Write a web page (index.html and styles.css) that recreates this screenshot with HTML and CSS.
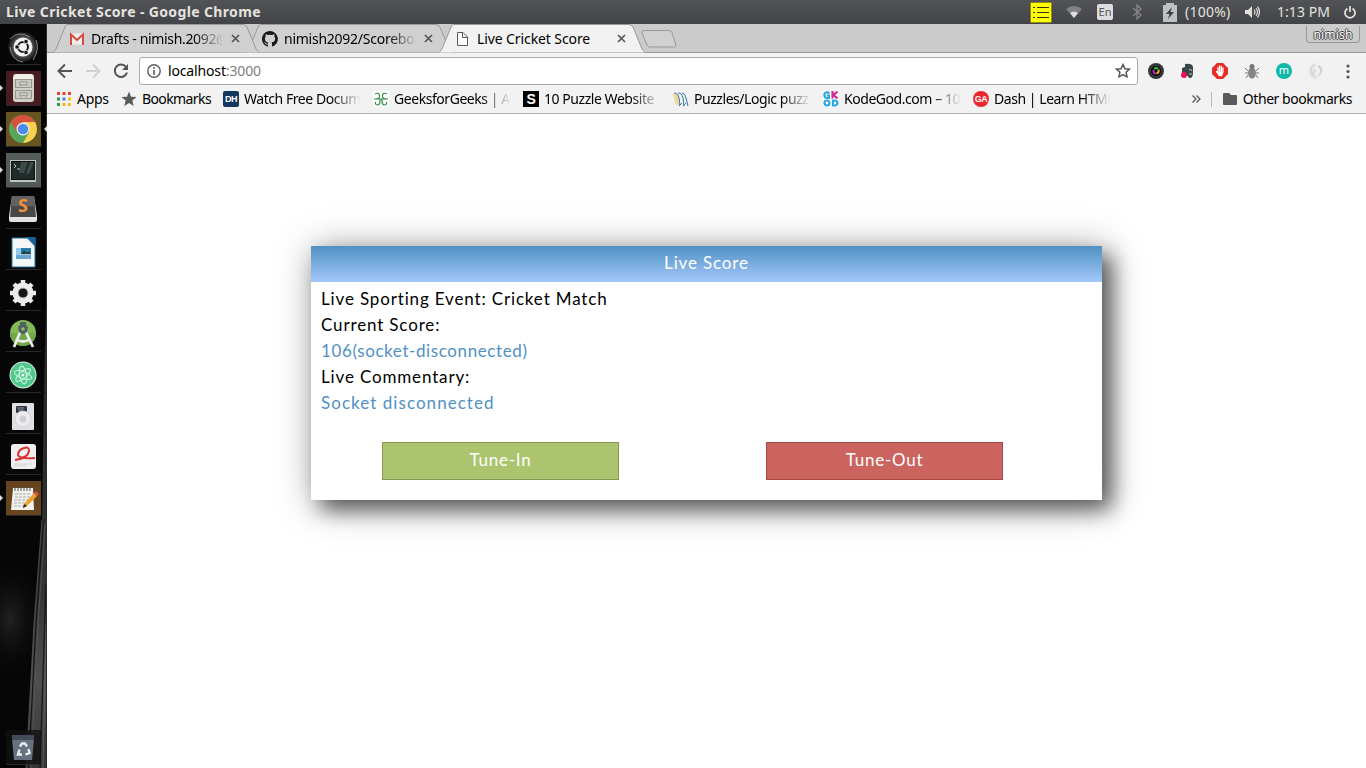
FILE: index.html
```html
<!DOCTYPE html>
<html lang="en">
<head>
<meta charset="utf-8">
<title>Live Cricket Score</title>
<link rel="stylesheet" href="styles.css">
</head>
<body>
<header class="panel">
  <span class="panel-title">Live Cricket Score - Google Chrome</span>
  <div class="indicators">
    <svg class="i-note" width="22" height="21" viewBox="0 0 22 21"><rect x=".5" y=".5" width="21" height="20" rx="1" fill="#ff0" stroke="#8b8c12"/><path d="M3 5.500h2M3 10.500h2M3 15.500h2M7 5.500h12M7 10.500h12M7 15.500h12" stroke="#353500" stroke-width="1"/></svg>
    <svg class="i-wifi" width="16" height="12" viewBox="0 0 16 12"><path d="M0 3Q8-3 16 3L8 12z" fill="#818285"/><path d="M4 7Q8 4 12 7L8 12z" fill="#dedfdc"/></svg>
    <span class="i-lang">En</span>
    <svg class="i-bt" width="11" height="16" viewBox="0 0 11 16"><path d="M1 4l8 7-4 4V1l4 4-8 7" fill="none" stroke="#88898b" stroke-width="1.3"/></svg>
    <svg class="i-batt" width="14" height="19" viewBox="0 0 14 19"><path d="M3 2V0h8v2h3v17H0V2z" fill="#bfc0c0"/><path d="M9 4L3 11h3.500L5 16l6-7H7.500z" fill="#3d3e41"/></svg>
    <span class="i-pct">(100%)</span>
    <svg class="i-vol" width="15" height="12" viewBox="0 0 15 12"><path d="M0 4h3l4-4v12L3 8H0z" fill="#e1e0da"/><path d="M9 3.500q2 2.500 0 5M11 2q3 4 0 8M12.500.5q4 5.500 0 11" fill="none" stroke="#dedfdc" stroke-width="1.200"/></svg>
    <span class="i-time">1:13 PM</span>
    <svg class="i-power" width="12" height="13" viewBox="0 0 12 13"><path d="M3.500 2.500a5 5 0 1 0 5 0M6 0v6" fill="none" stroke="#e4e3df" stroke-width="1.700"/></svg>
  </div>
</header>
<div class="desktop">
  <nav class="launcher">
    <svg class="grain" width="47" height="744" viewBox="0 0 47 744"><defs><linearGradient id="wood" x1="0" y1="0" x2="0" y2="1"><stop offset="0" stop-color="#222"/><stop offset=".65" stop-color="#333"/><stop offset=".82" stop-color="#505050"/><stop offset="1" stop-color="#353535"/></linearGradient><radialGradient id="haze"><stop offset="0" stop-color="#222"/><stop offset="1" stop-color="#080808" stop-opacity="0"/></radialGradient></defs><path d="M0 0h47v744H0z" fill="#060606"/><ellipse cx="10" cy="595" rx="35" ry="60" fill="url(#haze)"/><path d="M47 240L44 360 42 496 34 600 26 744H47z" fill="url(#wood)"/><path d="M42 496L34 600 26 744M45 500L38 600 31 744" stroke="#585858" fill="none" stroke-width=".8"/><path d="M43.500 496L36 600 28.500 744M46 560L40 744" stroke="#161616" fill="none" stroke-width="1.200"/><path d="M46 600L43 744" stroke="#666" stroke-width=".7"/><path d="M46.500 0v744" stroke="#2b2b2b"/></svg>
    <div class="tile"><svg viewBox="0 0 35 35"><defs><radialGradient id="dash"><stop offset=".4" stop-color="#777"/><stop offset="1" stop-color="#111"/></radialGradient></defs><circle cx="17" cy="17" r="15" fill="url(#dash)"/><path d="M4 9q8-9 20-2M30 10q4 9-3 20M4 17q2 14 13 15" stroke="#888" fill="none"/><circle cx="17" cy="17" r="9.500" fill="#f3f3f3"/><circle cx="17" cy="17" r="5" fill="none" stroke="#161616" stroke-width="2"/><g fill="#161616" stroke="#f3f3f3" stroke-width=".8"><circle cx="11" cy="17" r="2.200"/><circle cx="20" cy="11.500" r="2.200"/><circle cx="20" cy="22.500" r="2.200"/></g></svg></div>
    <div class="tile red run"><svg viewBox="0 0 35 35"><rect x="7" y="3" width="21" height="28" rx="3" fill="#d0d0c8"/><path d="M7 8l2-5h17l2 5z" fill="#efefeb"/><g fill="#c9c9c1" stroke="#969690"><rect x="9.500" y="8.500" width="16" height="8"/><rect x="9.500" y="19.500" width="16" height="8"/></g><g fill="#e8e8e3" stroke="#888"><path d="M14 11h7v3h-1l-2-1-3 1h-1zM14 22h7v3h-1l-2-1-3 1h-1z"/></g></svg></div>
    <div class="tile gold run active"><svg viewBox="0 0 35 35"><circle cx="17" cy="17" r="14" fill="#57a65b"/><path d="M17 17L4.900 10A14 14 0 0 1 29.100 10z" fill="#d94f3d"/><path d="M17 10h12A14 14 0 0 1 17 31l6.100-10.500z" fill="#fbd04f"/><path d="M4.900 10l6 10.500L17 10z" fill="#d94f3d"/><circle cx="17" cy="17" r="6.500" fill="#f4f4f4"/><circle cx="17" cy="17" r="5.300" fill="#4b8bed"/></svg></div>
    <div class="tile gray run"><svg viewBox="0 0 35 35"><rect x="4" y="7" width="26" height="22" fill="#bec2c0"/><rect x="5.500" y="8.500" width="23" height="18" fill="#202b29" stroke="#111"/><path d="M15 9l-2 11h5L22 9zM24 9l-4 12h3L28 9z" fill="#3c4b48"/><path d="M8 11l2 2-2 2M11 16h3" stroke="#bbb" fill="none"/></svg></div>
    <div class="tile"><svg viewBox="0 0 35 35"><path d="M6 2h22l3 20v4q0 2-2 2H5q-2 0-2-2v-4z" fill="#e2e2e2"/><path d="M6 2h22l2 21H4z" fill="#484848"/><path d="M6 2h22l1 10H5z" fill="#626262"/></svg><span class="sublime">S</span></div>
    <div class="tile"><svg viewBox="0 0 35 35"><path d="M6 3h23v29H6z" fill="#f5f6f7" stroke="#2272a4"/><path d="M20 2h9.500v10z" fill="#17649b"/><path d="M10 13h15v11H10z" fill="#93c8e7"/><path d="M15 13h10v6H15z" fill="#287eab"/><path d="M15 19l3-4 3 3 2-2 2 3z" fill="#293f37"/><path d="M10 20h15v4H10z" fill="#6aa5cd"/></svg></div>
    <div class="tile"><svg viewBox="0 0 35 35"><circle cx="17" cy="17" r="10.500" fill="#ececec"/><path d="M17 4v26M4 17h26M8 8l18 18M26 8L8 26" stroke="#ececec" stroke-width="4.500"/><circle cx="17" cy="17" r="5" fill="#141414" stroke="#bbb"/></svg></div>
    <div class="tile"><svg viewBox="0 0 35 35"><circle cx="17" cy="16" r="13" fill="#82b953"/><path d="M4 16h26a13 13 0 0 1-26 0z" fill="#70a748"/><path d="M15 13L8 30M19 13l8 17M10 22q7 5 14 0" fill="none" stroke="#eceeeb" stroke-width="2.700"/><path d="M14 5h6v3l2 2-1 5-3 2h-2l-3-2-1-5 2-2z" fill="#4c6263"/><circle cx="17" cy="12" r="1.700" fill="#97be6f"/></svg></div>
    <div class="tile"><svg viewBox="0 0 35 35"><circle cx="17" cy="17" r="13.500" fill="#d7efe1"/><circle cx="17" cy="17" r="12.500" fill="#52c88d"/><g fill="none" stroke="#c7f4dc" stroke-width="1.100"><ellipse cx="17" cy="17" rx="9" ry="3.500" transform="rotate(20 17 17)"/><ellipse cx="17" cy="17" rx="9" ry="3.500" transform="rotate(80 17 17)"/><ellipse cx="17" cy="17" rx="9" ry="3.500" transform="rotate(140 17 17)"/></g><circle cx="17" cy="17" r="1.500" fill="#fff"/></svg></div>
    <div class="tile"><svg viewBox="0 0 35 35"><rect x="6" y="4" width="22" height="27" rx="1" fill="#dfe0e5"/><rect x="10" y="7" width="11" height="7" rx="1" fill="#303541"/><path d="M11 9h7M12 11h5" stroke="#8890a0"/><circle cx="17" cy="20" r="8" fill="#ececf0" stroke="#d2d3d8"/><circle cx="17" cy="20" r="3.500" fill="#cfd0d6"/></svg></div>
    <div class="tile"><svg viewBox="0 0 35 35"><rect x="5" y="4" width="25" height="25" rx="3" fill="#efefef"/><path d="M9 20q13-2 14-9 0-5-5-3-6 2-6 7 1 4 17 3" fill="none" stroke="#da3136" stroke-width="2"/><path d="M8 24h18M8 26h12" stroke="#d4d4d4"/></svg></div>
    <div class="tile brown run"><svg viewBox="0 0 35 35"><path d="M7 7h20l1 22H5z" fill="#f1f1ee"/><path d="M9 6v4M12 6v4M15 6v4M18 6v4M21 6v4M24 6v4" stroke="#555"/><path d="M9 13h15M9 16h15M8 19h14M8 22h11M8 25h10" stroke="#aaa" stroke-dasharray="3 1"/><path d="M18 23l10-11 3 3-10 10-4 2z" fill="#ef9f2b"/><path d="M28 12l2-2 3 3-2 2z" fill="#d95050"/><path d="M17 27l1-4 3 2z" fill="#2a2520"/></svg></div>
    <div class="tile trash"><svg viewBox="0 0 35 35"><path d="M6 5h22v4l-2 21H8L6 9z" fill="#66707f"/><path d="M6 5h22v5H6z" fill="#434b58"/><g fill="none" stroke="#e8edf2" stroke-width="2.400"><path d="M14 16.500l2-3h3l2 3M22.500 19l1 4-4 1.500M16 24.500h-4l1.500-5"/></g></svg></div>
  </nav>
  <section class="browser">
    <div class="tabs">
      <div class="tab t1"><svg class="shape" width="206" height="29"><path d="M0 28.500L3 25 12 3Q13 .5 15 .5H190Q192 .5 194 3L203 25 206 28.500"/></svg>
        <svg class="fav" viewBox="0 0 16 16"><path d="M1 2.500h14v11H1z" fill="#eee"/><path d="M2 14V3.500l6 5.500 6-5.500V14" fill="none" stroke="#d94a3d" stroke-width="2"/></svg><span class="tab-label fade l1">Drafts - nimish.2092@</span><svg class="x" width="9" height="9"><path d="M1 1l7 7M8 1L1 8"/></svg></div>
      <div class="tab t2"><svg class="shape" width="206" height="29"><path d="M0 28.500L3 25 12 3Q13 .5 15 .5H190Q192 .5 194 3L203 25 206 28.500"/></svg>
        <svg class="fav" viewBox="0 0 16 16"><path d="M8 0C3.580 0 0 3.580 0 8c0 3.540 2.290 6.530 5.470 7.590.4.070.55-.17.55-.38V13.700c-2.200.5-2.700-.9-2.700-.9-.4-.9-.9-1.200-.9-1.200-.7-.5.100-.5.100-.5.800.1 1.200.8 1.200.8.700 1.200 1.900.9 2.300.7.100-.5.300-.9.500-1.100-1.800-.2-3.600-.9-3.600-4 0-.9.300-1.600.8-2.100-.1-.2-.4-1 .1-2.100 0 0 .7-.2 2.200.8a7.500 7.500 0 0 1 4 0c1.500-1 2.200-.8 2.200-.8.500 1.100.2 1.900.1 2.100.5.600.8 1.300.8 2.100 0 3.100-1.900 3.700-3.700 3.900.3.300.6.800.6 1.500v2.200c0 .2.100.5.600.4A8 8 0 0 0 8 0" fill="#181818"/></svg><span class="tab-label fade l2">nimish2092/Scoreboa</span><svg class="x" width="9" height="9"><path d="M1 1l7 7M8 1L1 8"/></svg></div>
      <div class="tab t3"><svg class="shape" width="206" height="29"><path d="M0 28.500L3 25 12 3Q13 .5 15 .5H190Q192 .5 194 3L203 25 206 28.500"/></svg>
        <svg class="fav" viewBox="0 0 16 16"><path d="M2.500 1.500H8L12.500 6v8.500h-10zM7.500 1.500v5h5" fill="#fff" stroke="#5a5a5a"/></svg><span class="tab-label l3">Live Cricket Score</span><svg class="x" width="9" height="9"><path d="M1 1l7 7M8 1L1 8"/></svg></div>
      <svg class="newtab" width="36" height="18"><path d="M3 .5h25q2 0 3 2l4 13q0 1.500-1.500 1.500H9q-2 0-3-2L1 3q-.5-2.500 2-2.500" fill="#d0d0d0" stroke="#999"/></svg>
      <span class="user">nimish</span>
    </div>
    <div class="toolbar">
      <div class="nav">
        <svg width="16" height="16"><path d="M15 8H2M8 1.500L1.500 8 8 14.500" fill="none" stroke="#555" stroke-width="2"/></svg>
        <svg width="16" height="16"><path d="M1 8h13M8 1.500L14.500 8 8 14.500" fill="none" stroke="#d1d1d1" stroke-width="2"/></svg>
        <svg width="16" height="16"><path d="M13 4A6.200 6.200 0 1 0 14 9.500" fill="none" stroke="#555" stroke-width="2"/><path d="M15 1v6H9z" fill="#555"/></svg>
      </div>
      <div class="address"><svg width="14" height="14"><circle cx="7" cy="7" r="6.200" fill="none" stroke="#5b5b5b" stroke-width="1.400"/><path d="M7 3v1.700M7 6v5" stroke="#5b5b5b" stroke-width="1.600"/></svg><span class="url">localhost<span class="port">:3000</span></span><svg class="star" width="16" height="16"><path d="M8 1.500l1.900 4.200 4.600.5-3.400 3.100.9 4.500L8 11.500l-4 2.300.9-4.500L1.500 6.200l4.600-.5z" fill="none" stroke="#555" stroke-width="1.500"/></svg></div>
      <div class="extensions">
        <svg viewBox="0 0 16 16"><circle cx="8" cy="8" r="8" fill="#35383b"/><circle cx="8" cy="8" r="5" fill="#080808"/><path d="M6 6q3-2 4 0" stroke="#26ca38" fill="none" stroke-width="2"/><path d="M5.500 7q0 4 2.500 3.500" stroke="#bd27d0" fill="none" stroke-width="2"/><path d="M10.500 6.500q1 3-2 4" stroke="#f0b01d" fill="none" stroke-width="2"/></svg>
        <svg viewBox="0 0 16 16"><path d="M5 1q7-1 8 3v5q0 6-3 6-2 0-2-2-5 0-6-4V5l3-1z" fill="#36474b"/><path d="M9 7q2-2 3 1M9 11h3" fill="none" stroke="#c7d0d0"/><circle cx="4" cy="12" r="3" fill="#f20c55"/></svg>
        <svg viewBox="0 0 16 16"><path d="M5 0h6l5 5v6l-5 5H5l-5-5V5z" fill="#e52d25"/><path d="M6 9V4.500M7.700 9V3M9.400 9V3.500M11 9V5M4.500 8.500l3 4h2L11 9" fill="#fff" stroke="#fff" stroke-width="1.300" stroke-linecap="round"/></svg>
        <svg viewBox="0 0 16 16"><ellipse cx="8" cy="10" rx="4" ry="5.500" fill="#858585"/><circle cx="8" cy="3.500" r="2.500" fill="#777"/><path d="M4 8L1 5M12 8l3-3M4 10H1M12 10h3M4 12l-2 3M12 12l2 3" stroke="#777"/></svg>
        <span class="m">m</span>
        <svg viewBox="0 0 16 16"><path d="M8 1.500A6.500 6.500 0 0 0 6 13.500q-2-4 2-7" fill="none" stroke="#dcdcdc" stroke-width="3"/><path d="M10 2q8 3 2 10-2 2-5 2 5-2 5-6 0-3-2-3z" fill="#d0d0d0"/></svg>
        <svg viewBox="0 0 16 16"><g fill="#555"><circle cx="8" cy="3" r="1.600"/><circle cx="8" cy="8.500" r="1.600"/><circle cx="8" cy="14" r="1.600"/></g></svg>
      </div>
    </div>
    <div class="bookmarks">
      <div class="bm b-apps"><svg viewBox="0 0 16 16"><path d="M1 1h3v3H1zM6.500 1h3v3h-3zM12 1h3v3h-3z" fill="#ed3e36"/><path d="M1 6.500h3v3H1zM1 12h3v3H1z" fill="#28984c"/><path d="M6.500 6.500h3v3h-3z" fill="#3486ef"/><path d="M12 6.500h3v3h-3zM6.500 12h3v3h-3zM12 12h3v3h-3z" fill="#fbb90a"/></svg><span>Apps</span></div>
      <div class="bm b-star"><svg viewBox="0 0 16 16"><path d="M8 .5l2 5.300 5.600.2-4.300 3.600 1.400 5.500L8 12l-4.700 3.100 1.400-5.500L.4 6 6 5.800z" fill="#5a5a5a"/></svg><span>Bookmarks</span></div>
      <div class="bm wide"><span class="fi dh">DH</span><span class="fade">Watch Free Docum</span></div>
      <div class="bm wide"><svg viewBox="0 0 16 16"><path d="M0 0h16v16H0z" fill="#fff"/><path d="M2 3q4-2 4.500 1.500Q7 8 2 8M14 3Q10 1 9.500 4.500 9 8 14 8M1 8h14M7 8q.5 6-2.500 6Q2 14 2.500 11M9 8q-.5 6 2.500 6 2.500 0 2-3" fill="none" stroke="#2f8d46" stroke-width="1.200"/></svg><span class="fade">GeeksforGeeks | A</span></div>
      <div class="bm wide"><span class="fi s">S</span><span class="fade">10 Puzzle Website</span></div>
      <div class="bm wide"><svg viewBox="0 0 16 16"><path d="M0 3q3-2 6 2l1 9q-4 1-5-2z" fill="#ead9a0"/><path d="M1 2q4 0 5 5l1 7M5 2q4 0 5 5l1 8M9 2q3 0 4 5l2 8M6 15l3-3M10 15l3-3" fill="none" stroke="#3973a9"/></svg><span class="fade">Puzzles/Logic puzz</span></div>
      <div class="bm wide"><svg class="gk" viewBox="0 0 16 16"><path d="M0 0h16v16H0z" fill="#fff"/><g fill="none" stroke="#29a9df" stroke-width="2.200"><path d="M6.500 2.500Q5 1 3 1.500T1.500 4q0 3 2.500 3h2V4.500H4"/><circle cx="4" cy="12" r="2.500"/><path d="M10 9.500v5h2q2.500-.5 2.500-2.500T12 9.500z"/></g><path d="M9.500 0v7.500M14.500.5l-4 3.500 4 3.500" fill="none" stroke="#d5258e" stroke-width="2.200"/></svg><span class="fade">KodeGod.com – 10</span></div>
      <div class="bm wide"><span class="fi ga">GA</span><span class="fade">Dash | Learn HTML</span></div>
      <div class="other"><svg class="more" width="9" height="8"><path d="M.5.500L4 4 .5 7.500M4.500.5L8 4 4.500 7.500" fill="none" stroke="#555" stroke-width="1.300"/></svg><span class="rule"></span><svg width="14" height="12"><path d="M0 1q0-1 1-1h5l2 2h5q1 0 1 1v8q0 1-1 1H1q-1 0-1-1z" fill="#5a5a5a"/></svg><span class="other-label">Other bookmarks</span></div>
    </div>
    <main class="page">
      <section class="card">
        <h1>Live Score</h1>
        <div class="details">
          <p class="event">Live Sporting Event: Cricket Match</p>
          <p>Current Score:</p>
          <p class="value score">106(socket-disconnected)</p>
          <p>Live Commentary:</p>
          <p class="value comment">Socket disconnected</p>
        </div>
        <div class="actions"><button class="in">Tune-In</button><button class="out">Tune-Out</button></div>
      </section>
    </main>
  </section>
</div>
</body>
</html>
```
FILE: styles.css
```css
* { box-sizing: border-box; }
body { margin: 0; width: 1366px; height: 768px; overflow: hidden; font: 14px "Noto Sans", sans-serif; color: #000; background: #fff; }
svg { display: block; flex: none; }
.panel { height: 24px; display: flex; justify-content: space-between; align-items: center; padding: 0 10px 0 6px; background: linear-gradient(#525357, #434447); color: #e4e3df; }
.panel-title { padding-bottom: 2px; font-weight: 700; font-size: 14px; letter-spacing: .36px; white-space: nowrap; }
.indicators { display: flex; align-items: center; white-space: nowrap; }
.i-wifi { margin-left: 14px; }
.i-lang { width: 16px; height: 16px; margin-left: 15px; border-radius: 2px; background: #dcdddc; color: #55565a; font-size: 11px; line-height: 16px; text-align: center; }
.i-bt { margin-left: 19px; }
.i-batt { margin-left: 20px; }
.i-pct { width: 46px; margin-left: 8px; padding-bottom: 1px; letter-spacing: .25px; }
.i-vol { margin-left: 14px; }
.i-time { width: 53px; margin-left: 17px; padding-bottom: 1px; letter-spacing: .05px; }
.i-power { margin-left: 14px; }
.desktop { display: flex; height: 744px; }
.launcher { position: relative; width: 47px; flex: none; display: flex; flex-direction: column; gap: 6px; padding: 6px 0 3px 6px; background: #060606; }
.grain { position: absolute; left: 0; top: 0; }
.tile { position: relative; width: 35px; height: 35px; border-bottom: 1px solid #292929; background: #09090999; }
.tile svg { width: 35px; height: 35px; }
.red { background: #481d21; }
.gold { background: #685420; }
.gray { background: #555b5a; }
.brown { background: #65441e; }
.run::before { content: ""; position: absolute; left: -6px; top: 14px; border: 3px solid transparent; border-left-color: #ddd; }
.active::after { content: ""; position: absolute; right: -6px; top: 14px; border: 3px solid transparent; border-right-color: #ddd; }
.sublime { position: absolute; left: 12px; top: 0; font: 700 18px/23px "Open Sans", sans-serif; color: #ef9137; }
.trash { margin-top: auto; background: #111c; }
.browser { width: 1319px; display: flex; flex-direction: column; background: #fff; }
.tabs { height: 29px; flex: none; display: flex; padding-left: 6px; background: #cbcbcb; border-bottom: 1px solid #999; }
.tab { position: relative; width: 206px; height: 29px; margin-right: -13px; flex: none; display: flex; align-items: center; padding-left: 16px; }
.shape { position: absolute; left: 0; top: 0; }
.shape path { fill: #d0d0d0; stroke: #999; }
.t1 { z-index: 2; } .t2 { z-index: 1; } .t3 { z-index: 3; }
.t3 .shape path { fill: #f2f2f2; }
.fav { position: relative; width: 16px; height: 16px; }
.tab-label { position: relative; width: 133px; margin-left: 6px; padding-bottom: 1px; overflow: hidden; white-space: nowrap; letter-spacing: -.1px; }
.l1 { letter-spacing: -.35px; }
.l2 { letter-spacing: -.25px; }
.x { position: relative; margin-left: 7px; }
.x path { stroke: #555; stroke-width: 1.700; }
.fade { overflow: hidden; white-space: nowrap; mask-image: linear-gradient(to right, #000 calc(100% - 30px), transparent); }
.newtab { margin: 6px 0 0 9px; }
.user { width: 54px; height: 17px; margin: 2px 6px 0 auto; border: 1px solid #999; border-top: 0; border-radius: 0 0 4px 4px; text-align: center; font-size: 12px; line-height: 17px; letter-spacing: .2px; color: #fff; text-shadow: 1px 0 #444, -1px 0 #444, 0 1px #444, 0 -1px #444; }
.toolbar { height: 34px; flex: none; display: flex; align-items: center; padding: 2px 10px 0; background: #f2f2f2; }
.nav { width: 82px; display: flex; gap: 12px; }
.address { width: 999px; height: 28px; display: flex; align-items: center; padding: 0 6px 0 7px; border: 1px solid #aaa; border-radius: 3px; background: #fff; }
.url { margin-left: 7px; padding-bottom: 1px; letter-spacing: -.15px; }
.port { color: #808080; }
.star { margin-left: auto; }
.extensions { display: flex; gap: 16px; margin-left: 10px; }
.extensions svg { width: 16px; height: 16px; }
.m { width: 16px; height: 16px; border-radius: 50%; background: #10b8a8; color: #fff; font-size: 11px; line-height: 14px; text-align: center; }
.bookmarks { height: 27px; flex: none; display: flex; align-items: center; padding: 0 14px 2px 9px; background: #f2f2f2; border-bottom: 1px solid #b0b0b0; white-space: nowrap; letter-spacing: -.45px; }
.bm { flex: none; display: flex; align-items: center; gap: 5px; }
.bm > svg, .fi { width: 16px; height: 16px; flex: none; }
.bm > span:last-child, .other-label { padding-bottom: 2px; }
.b-apps { width: 65px; letter-spacing: -.3px; }
.b-star { width: 102px; letter-spacing: -.6px; }
.wide { width: 150px; padding-right: 12px; }
.wide .fade { width: 118px; }
.fi { display: block; overflow: hidden; text-align: center; color: #fff; font: 700 12px/16px "Liberation Sans", sans-serif; }
.dh { background: #12385f; border-radius: 2px; font-size: 9px; }
.s { background: #000; font-size: 14px; }
.ga { border-radius: 50%; background: #e8282e; font-size: 9px; }
.other { display: flex; align-items: center; margin-left: auto; }
.rule { width: 1px; height: 15px; margin: 0 11px 0 10px; background: #bbb; }
.other-label { margin-left: 6px; }
.page { flex: 1; padding: 132px 264px; }
.card { width: 791px; height: 254px; background: #fff; box-shadow: 10px 10px 20px rgba(0,0,0,.55), 3px 3px 36px rgba(0,0,0,.35); font-family: Lato, sans-serif; font-size: 17px; letter-spacing: .85px; }
h1 { height: 36px; margin: 0; background: linear-gradient(#5192c3, #a3c7fa); color: #fff; font-size: 17px; font-weight: 400; line-height: 34px; text-align: center; }
.details { padding: 4px 10px 0; }
p { margin: 0; line-height: 26px; white-space: nowrap; }
.value { color: #5090c5; }
.score { letter-spacing: .6px; }
.comment { letter-spacing: 1.05px; }
.actions { display: flex; gap: 147px; padding: 26px 0 0 71px; }
button { width: 237px; height: 38px; padding: 0 0 3px; border: 1px solid #84994f; background: #acc46d; color: #fff; font: 17px Lato, sans-serif; letter-spacing: .75px; }
.out { border-color: #a54842; background: #cb645f; }
```
